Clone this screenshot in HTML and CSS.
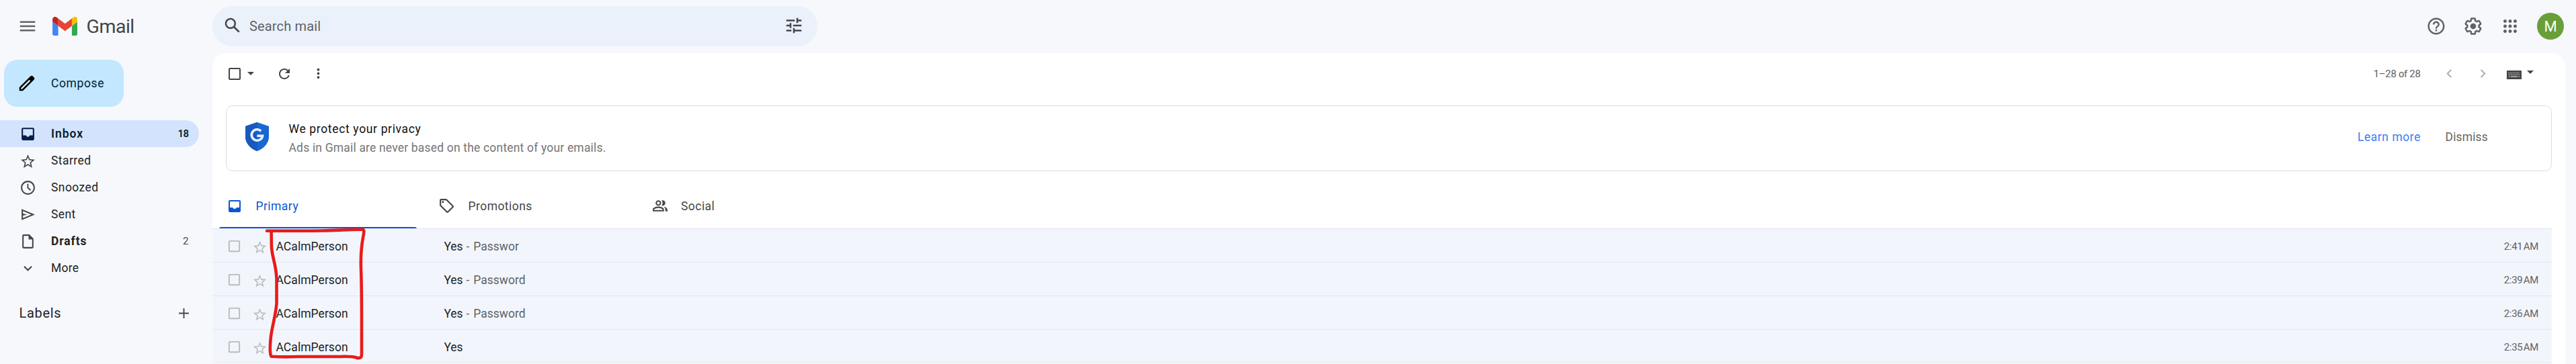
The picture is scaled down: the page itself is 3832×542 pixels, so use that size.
FILE: index.html
```html
<!DOCTYPE html>
<html lang="en">
<head>
<meta charset="utf-8">
<title>Inbox - Gmail</title>
<link rel="stylesheet" href="styles.css">
</head>
<body>
<svg class="sprite" aria-hidden="true">
  <symbol id="inbox" viewBox="0 0 24 24"><path d="M19 3H5c-1.1 0-2 .9-2 2v14c0 1.1.9 2 2 2h14c1.1 0 2-.9 2-2V5c0-1.1-.9-2-2-2zm0 11h-4.2c-.4 1.2-1.5 2-2.8 2s-2.4-.8-2.8-2H5V5h14v9z"/></symbol>
  <symbol id="star" viewBox="0 0 24 24"><path d="M22 9.24l-7.19-.62L12 2 9.19 8.63 2 9.24l5.46 4.73L5.82 21 12 17.27 18.18 21l-1.63-7.03L22 9.24zM12 15.4l-3.76 2.27 1-4.28-3.32-2.88 4.38-.38L12 6.1l1.71 4.04 4.38.38-3.32 2.88 1 4.28L12 15.4z"/></symbol>
  <symbol id="clock" viewBox="0 0 24 24"><path d="M12 2C6.5 2 2 6.5 2 12s4.5 10 10 10 10-4.5 10-10S17.5 2 12 2zm0 18c-4.41 0-8-3.59-8-8s3.59-8 8-8 8 3.59 8 8-3.59 8-8 8z"/><path d="M11 6.5v6l4.2 3.8 1.3-1.4-3.7-3.3V6.5z"/></symbol>
  <symbol id="send" viewBox="0 0 24 24"><path d="M3 20V4l19 8-19 8zm2-3l11.85-5L5 7v3.5l6 1.5-6 1.5V17z"/></symbol>
  <symbol id="draft" viewBox="0 0 24 24"><path d="M14 2H6c-1.1 0-2 .9-2 2v16c0 1.1.9 2 2 2h12c1.1 0 2-.9 2-2V8l-6-6zM6 20V4h7v5h5v11H6z"/></symbol>
  <symbol id="box" viewBox="0 0 24 24"><path d="M19 5v14H5V5h14m0-2H5c-1.1 0-2 .9-2 2v14c0 1.1.9 2 2 2h14c1.1 0 2-.9 2-2V5c0-1.1-.9-2-2-2z"/></symbol>
  <symbol id="caret" viewBox="0 0 10 5"><path d="M0 0h10L5 5z"/></symbol>
</svg>

<header class="topbar">
  <svg class="menu" viewBox="0 0 24 24"><path d="M3 18h18v-2H3v2zm0-5h18v-2H3v2zm0-7v2h18V6H3z"/></svg>
  <svg class="logo" viewBox="52 42 88 66">
    <path fill="#4285f4" d="M58 108h14V74L52 59v43c0 3.320 2.690 6 6 6"/>
    <path fill="#34a853" d="M120 108h14c3.320 0 6-2.690 6-6V59l-20 15"/>
    <path fill="#fbbc04" d="M120 48v26l20-15v-8c0-7.420-8.470-11.650-14.400-7.200"/>
    <path fill="#ea4335" d="M72 74V48l24 18 24-18v26L96 92"/>
    <path fill="#c5221f" d="M52 51v8l20 15V48l-5.600-4.200c-5.940-4.450-14.400-.22-14.400 7.200"/>
  </svg>
  <span class="brand">Gmail</span>
  <div class="search">
    <svg class="i30" viewBox="0 0 24 24"><path d="M20.490 19l-5.730-5.730C15.530 12.200 16 10.910 16 9.500 16 5.910 13.090 3 9.500 3S3 5.910 3 9.500 5.910 16 9.500 16c1.410 0 2.700-.47 3.770-1.240L19 20.490 20.490 19zM5 9.500C5 7.010 7.010 5 9.500 5S14 7.010 14 9.500 11.990 14 9.500 14 5 11.990 5 9.500z"/></svg>
    <span class="placeholder">Search mail</span>
    <svg class="i30 tune" viewBox="0 0 24 24"><path d="M3 17v2h6v-2H3zM3 5v2h10V5H3zm10 16v-2h8v-2h-8v-2h-2v6h2zM7 9v2H3v2h4v2h2V9H7zm14 4v-2H11v2h10zm-6-4h2V7h4V5h-4V3h-2v6z"/></svg>
  </div>
  <div class="account">
    <svg class="i30" viewBox="0 0 24 24"><path d="M11 18h2v-2h-2v2zm1-16C6.480 2 2 6.480 2 12s4.480 10 10 10 10-4.480 10-10S17.520 2 12 2zm0 18c-4.410 0-8-3.590-8-8s3.590-8 8-8 8 3.590 8 8-3.590 8-8 8zm0-14c-2.210 0-4 1.790-4 4h2c0-1.100.9-2 2-2s2 .9 2 2c0 2-3 1.750-3 5h2c0-2.250 3-2.500 3-5 0-2.210-1.790-4-4-4z"/></svg>
    <svg class="i30" viewBox="0 0 24 24"><path d="M13.850 22.250h-3.700c-.74 0-1.360-.54-1.450-1.270l-.27-1.890c-.27-.14-.53-.29-.79-.46l-1.800.72c-.7.260-1.470-.03-1.810-.65L2.200 15.530c-.35-.66-.2-1.440.36-1.880l1.530-1.190c-.01-.15-.02-.3-.02-.46 0-.15.010-.31.020-.46l-1.520-1.190c-.59-.45-.74-1.260-.37-1.880l1.850-3.190c.34-.62 1.110-.9 1.790-.63l1.810.73c.26-.17.520-.32.780-.46l.27-1.910c.09-.7.710-1.250 1.440-1.250h3.700c.74 0 1.360.54 1.450 1.270l.27 1.890c.27.140.53.290.79.460l1.800-.72c.71-.26 1.480.03 1.820.65l1.840 3.180c.36.660.2 1.440-.36 1.880l-1.520 1.190c.01.150.020.3.020.460s-.01.310-.02.460l1.520 1.190c.56.450.720 1.230.370 1.860l-1.860 3.220c-.34.620-1.110.9-1.800.630l-1.800-.72c-.26.170-.52.320-.78.460l-.27 1.910c-.1.680-.72 1.220-1.460 1.220zm-3.230-2h2.760l.37-2.550.53-.22c.44-.18.880-.44 1.340-.78l.45-.34 2.380.96 1.380-2.400-2.030-1.580.07-.56c.030-.26.060-.51.060-.78s-.03-.53-.06-.78l-.07-.56 2.030-1.580-1.390-2.400-2.390.96-.45-.35c-.42-.32-.87-.58-1.330-.77l-.52-.22-.37-2.550h-2.760l-.37 2.550-.53.210c-.44.190-.88.440-1.340.79l-.45.330-2.380-.95-1.390 2.390 2.030 1.580-.07.560a7 7 0 0 0-.06.790c0 .26.020.53.060.78l.07.560-2.030 1.580 1.380 2.400 2.390-.96.450.35c.43.330.86.580 1.330.77l.53.220.38 2.550z"/><circle cx="12" cy="12" r="3.500"/></svg>
    <svg class="i30" viewBox="0 0 24 24"><path d="M6 8c1.100 0 2-.9 2-2s-.9-2-2-2-2 .9-2 2 .9 2 2 2zm6 12c1.100 0 2-.9 2-2s-.9-2-2-2-2 .9-2 2 .9 2 2 2zm-6 0c1.100 0 2-.9 2-2s-.9-2-2-2-2 .9-2 2 .9 2 2 2zm0-6c1.100 0 2-.9 2-2s-.9-2-2-2-2 .9-2 2 .9 2 2 2zm6 0c1.100 0 2-.9 2-2s-.9-2-2-2-2 .9-2 2 .9 2 2 2zm4-8c0 1.100.9 2 2 2s2-.9 2-2-.9-2-2-2-2 .9-2 2zm-4 2c1.100 0 2-.9 2-2s-.9-2-2-2-2 .9-2 2 .9 2 2 2zm6 6c1.100 0 2-.9 2-2s-.9-2-2-2-2 .9-2 2 .9 2 2 2zm0 6c1.100 0 2-.9 2-2s-.9-2-2-2-2 .9-2 2 .9 2 2 2z"/></svg>
    <div class="avatar">M</div>
  </div>
</header>

<div class="body">
  <nav class="sidebar">
    <button class="compose">
      <svg class="pencil" viewBox="0 0 24 24"><path d="M20.410 4.940l-1.350-1.350c-.78-.78-2.050-.78-2.830 0L3 16.820V21h4.180L20.410 7.770c.79-.78.790-2.050 0-2.830zM6.410 19.060L5 19v-1.360l9.820-9.820 1.410 1.410-9.820 9.830z"/></svg>
      <span>Compose</span>
    </button>
    <div class="folder active"><svg class="i25"><use href="#inbox"/></svg><span class="label inbox">Inbox</span><span class="count">18</span></div>
    <div class="folder"><svg class="i25 low"><use href="#star"/></svg><span class="label">Starred</span></div>
    <div class="folder"><svg class="i25"><use href="#clock"/></svg><span class="label">Snoozed</span></div>
    <div class="folder"><svg class="i25 sent"><use href="#send"/></svg><span class="label">Sent</span></div>
    <div class="folder"><svg class="i25"><use href="#draft"/></svg><span class="label bold">Drafts</span><span class="count plain">2</span></div>
    <div class="folder"><svg class="i25" viewBox="0 0 24 24"><path d="M16.590 8.590L12 13.170 7.410 8.590 6 10l6 6 6-6z"/></svg><span class="label more">More</span></div>
    <div class="labels"><h2>Labels</h2><svg class="i25" viewBox="0 0 24 24"><path d="M19.200 12.900h-6.300v6.300h-1.800v-6.300H4.800v-1.800h6.300V4.800h1.800v6.300h6.300z"/></svg></div>
  </nav>

  <main class="panel">
    <div class="toolbar">
      <svg class="i24"><use href="#box"/></svg>
      <svg class="caret"><use href="#caret"/></svg>
      <svg class="i24 refresh" viewBox="0 0 24 24"><path d="M17.650 6.350A7.960 7.960 0 0 0 12 4c-4.420 0-7.990 3.580-7.990 8s3.570 8 7.990 8c3.730 0 6.840-2.550 7.730-6h-2.080A5.990 5.990 0 0 1 12 18c-3.310 0-6-2.690-6-6s2.690-6 6-6c1.660 0 3.140.690 4.220 1.780L13 11h7V4l-2.350 2.350z"/></svg>
      <svg class="i24 dots" viewBox="0 0 24 24"><path d="M12 8c1.100 0 2-.9 2-2s-.9-2-2-2-2 .9-2 2 .9 2 2 2zm0 2c-1.100 0-2 .9-2 2s.9 2 2 2 2-.9 2-2-.9-2-2-2zm0 6c-1.100 0-2 .9-2 2s.9 2 2 2 2-.9 2-2-.9-2-2-2z"/></svg>
      <span class="range">1–28 of 28</span>
      <svg class="i24 page" viewBox="0 0 24 24"><path d="M15.410 7.410L14 6l-6 6 6 6 1.410-1.410L10.830 12z"/></svg>
      <svg class="i24 page next" viewBox="0 0 24 24"><path d="M10 6L8.590 7.410 13.170 12l-4.580 4.590L10 18l6-6z"/></svg>
      <svg class="keyboard" viewBox="0 0 22 13"><rect width="22" height="13" rx=".5" fill="#444746"/><path d="M2.500 3.500h17M2.500 6h17" stroke="#a5a7a6" stroke-width="1.500" stroke-dasharray="1.300 .8"/><path d="M6 9h10M3 9h1.500M17.500 9H19" stroke="#c4c6c5" stroke-width="1.500"/></svg>
      <svg class="caret lang"><use href="#caret"/></svg>
    </div>

    <section class="notice">
      <svg class="shield" viewBox="0 0 35 43">
        <path fill="#1967d2" d="M17.500 0L35 6v15.500C35 31 27.500 39.500 17.500 43 7.500 39.500 0 31 0 21.500V6z"/>
        <path fill="#185abc" d="M17.500 0v43C7.500 39.500 0 31 0 21.500V6z"/>
        <path fill="none" stroke="#e8f0fe" stroke-width="3.600" d="M23.300 13.200A8.200 8.200 0 1 0 25.600 20.200H17.300"/>
      </svg>
      <div class="copy"><strong>We protect your privacy</strong><p>Ads in Gmail are never based on the content of your emails.</p></div>
      <a class="learn">Learn more</a>
      <a class="dismiss">Dismiss</a>
    </section>

    <div class="tabs">
      <div class="tab current"><svg class="i24"><use href="#inbox"/></svg><span>Primary</span></div>
      <div class="tab promo"><svg class="i25" viewBox="0 0 24 24"><path d="M21.410 11.580l-9-9C12.050 2.220 11.550 2 11 2H4c-1.100 0-2 .9-2 2v7c0 .55.220 1.050.590 1.420l9 9c.36.360.860.580 1.410.580s1.050-.22 1.410-.59l7-7c.37-.36.590-.86.590-1.410s-.23-1.060-.59-1.420zM13 20.010L4 11V4h7v-.01l9 9-7 7.020z"/><circle cx="6.500" cy="6.500" r="1.500"/></svg><span>Promotions</span></div>
      <div class="tab social"><svg class="i25" viewBox="0 0 24 24"><path d="M16.500 13.100c1.600 1.100 2.500 2.400 2.500 4.400V20h3v-2.500c0-2.400-2.700-3.900-5.500-4.400zM15 12c2.200 0 4-1.800 4-4s-1.800-4-4-4c-.5 0-.9.1-1.300.2C14.500 5.300 15 6.600 15 8s-.5 2.700-1.300 3.800c.4.100.8.200 1.300.2zM9 12c2.210 0 4-1.790 4-4s-1.790-4-4-4-4 1.790-4 4 1.790 4 4 4zm0-6c1.100 0 2 .9 2 2s-.9 2-2 2-2-.9-2-2 .9-2 2-2zm0 7c-2.670 0-8 1.340-8 4v3h16v-3c0-2.660-5.330-4-8-4zm6 5H3v-.99C3.200 16.290 6.300 15 9 15s5.800 1.290 6 2v1z"/></svg><span>Social</span></div>
    </div>

    <div class="mails">
      <div class="mail"><svg class="i23"><use href="#box"/></svg><svg class="i23 star"><use href="#star"/></svg><span class="from">ACalmPerson</span><span class="subject">Yes</span><span class="snippet"><i>-</i>Passwor</span><time>2:41&#8239;AM</time></div>
      <div class="mail"><svg class="i23"><use href="#box"/></svg><svg class="i23 star"><use href="#star"/></svg><span class="from">ACalmPerson</span><span class="subject">Yes</span><span class="snippet"><i>-</i>Password</span><time>2:39&#8239;AM</time></div>
      <div class="mail"><svg class="i23"><use href="#box"/></svg><svg class="i23 star"><use href="#star"/></svg><span class="from">ACalmPerson</span><span class="subject">Yes</span><span class="snippet"><i>-</i>Password</span><time>2:36&#8239;AM</time></div>
      <div class="mail last"><svg class="i23"><use href="#box"/></svg><svg class="i23 star"><use href="#star"/></svg><span class="from">ACalmPerson</span><span class="subject">Yes</span><time>2:35&#8239;AM</time></div>
      <svg class="scribble" viewBox="0 0 160 210"><path d="M13 13.700C40 14 75 13.700 96 13.500S135 11.500 155 11.800C159 12 157 17 156 24C153 40 152.500 55 153 70C154 95 154 115 154 150V198Q154 204 148 203C140 200 132 200.500 122 201H60C45 201.500 32 201.500 19.500 200.700C17 196 18 180 19 171C21 155 26 140 27.500 122V85C26.500 62 21 55 20 38C19.500 28 20 22 19.500 15"/></svg>
    </div>
  </main>
</div>
</body>
</html>
```
FILE: styles.css
```css
* { box-sizing: border-box; }
body {
  margin: 0;
  width: 3832px;
  height: 542px;
  overflow: hidden;
  background: #f6f8fc;
  color: #1f1f1f;
  font: 17.5px Roboto, "Liberation Sans", sans-serif;
}
svg { flex: none; display: block; fill: #444746; }
.sprite { position: absolute; width: 0; height: 0; }
.i23 { width: 23px; height: 23px; }
.i24 { width: 24px; height: 24px; }
.i25 { width: 25px; height: 25px; }
.i30 { width: 30px; height: 30px; }

/* Top bar */
.topbar { display: flex; align-items: center; height: 79px; padding: 0 18px 1px 26px; }
.menu { width: 30px; height: 30px; fill: #5f6368; }
.logo { width: 37.5px; height: 28px; margin-left: 21.5px; }
.brand { width: 187.5px; margin-left: 13.5px; font-size: 28.5px; letter-spacing: -.5px; color: #444746; }
.search { display: flex; align-items: center; width: 900px; height: 60px; padding: 0 20px 0 15px; border-radius: 30px; background: #eaf1fb; }
.search .i30 { margin-top: -2px; }
.search .tune { margin-left: auto; }
.placeholder { margin-left: 10px; font-size: 20px; letter-spacing: .15px; color: #5f6368; }
.account { display: flex; align-items: center; gap: 25px; margin-left: auto; }
.account svg { fill: #5f6368; }
.avatar { width: 40px; height: 40px; border-radius: 50%; background: #689f38; color: #fff; font-size: 22px; line-height: 42px; text-align: center; }

/* Sidebar */
.body { display: flex; }
.sidebar { width: 316px; padding-top: 10px; }
.compose { display: flex; align-items: center; width: 178px; height: 70px; margin: 0 0 20px 6px; padding: 0 0 0 19px; border: 0; border-radius: 20px; background: #c2e7ff; color: #001d35; font: inherit; letter-spacing: .6px; }
.pencil { width: 30px; height: 30px; fill: #000; margin-right: 21px; }
.folder { display: flex; align-items: center; width: 296px; height: 40px; padding: 0 15.5px 0 29px; }
.folder.active { border-radius: 0 20px 20px 0; background: #d3e3fd; color: #001d35; }
.active svg { fill: #041e49; }
.label { margin-left: 22px; letter-spacing: .43px; }
.label.inbox { font-weight: 600; letter-spacing: .95px; }
.label.bold { font-weight: 700; letter-spacing: .9px; }
.label.more { letter-spacing: .2px; }
.count { margin-left: auto; font-size: 15px; font-weight: 600; letter-spacing: -.6px; }
.count.plain { font-weight: 400; letter-spacing: 0; color: #444746; }
.low { margin-top: 2px; }
.labels { display: flex; align-items: center; justify-content: space-between; width: 296px; height: 40px; margin-top: 27px; padding: 0 10px 0 28.5px; }
.labels h2 { margin: 0; font-size: 20px; font-weight: 400; letter-spacing: .7px; }

/* Mail panel */
.panel { width: 3500px; height: 463px; overflow: hidden; border-radius: 20px 20px 0 0; background: #fff; }
.toolbar { display: flex; align-items: center; height: 61px; padding: 0 47px 0 20.5px; }
.caret { width: 10px; height: 5px; margin-left: 7.5px; }
.refresh { margin-left: 33px; }
.dots { width: 23px; height: 23px; margin-left: 26.5px; }
.range { margin-left: auto; font-size: 15px; letter-spacing: -.35px; color: #5e5e5e; }
.page { width: 25px; height: 25px; margin-left: 30px; fill: #b0b1b1; }
.page.next { margin-left: 25px; }
.keyboard { width: 22px; height: 13px; margin: 3px 0 0 23.5px; }
.caret.lang { margin: -4px 0 0 8px; }

.notice { display: flex; align-items: center; width: 3460px; height: 98px; margin: 17px 0 0 20px; padding: 0 94px 0 28px; border: 1px solid #dadce0; border-radius: 10px; }
.shield { width: 35px; height: 43px; margin-top: -6px; }
.copy { margin: -1px auto 0 29.5px; line-height: 28px; }
.copy strong { display: block; font-weight: 450; letter-spacing: .65px; color: #111; }
.copy p { margin: 0; letter-spacing: .18px; color: #757575; }
.learn, .dismiss { margin-top: -5px; letter-spacing: .55px; color: #3b7cf5; }
.dismiss { margin-left: 36.5px; letter-spacing: .15px; color: #666; }

.tabs { display: flex; height: 85px; padding-top: 15px; }
.tab { display: flex; align-items: center; width: 316px; height: 70px; padding: 3px 0 0 20.5px; color: #444746; letter-spacing: .45px; font-weight: 450; }
.tab span { margin-left: 20px; }
.tab.current { position: relative; color: #0b57d0; }
.tab.current svg { fill: #0b57d0; }
.tab.current::after { content: ""; position: absolute; left: 10px; bottom: -1px; width: 294px; height: 3px; border-radius: 3px 3px 0 0; background: #0b57d0; }
.tab.promo { padding-left: 19.5px; }
.tab.social { padding-left: 21.5px; }
.tab.social span { margin-left: 18.5px; }

.mails { position: relative; width: 3480px; }
.mail { display: flex; align-items: center; height: 50px; padding: 2px 20px 0 20.5px; border-top: 1px solid #e1e5ec; background: #f2f6fc; }
.mail.last { height: 51px; padding-bottom: 0; border-bottom: 1px solid #e1e5ec; }
.mail svg { fill: #b9bbbe; }
.mail .star { margin: 3px 0 0 15px; }
.from { width: 250px; margin-left: 13px; letter-spacing: .05px; }
.subject { letter-spacing: -.1px; }
.snippet { margin-left: 5px; color: #5f6368; }
.snippet i { margin-right: 6px; font-style: normal; }
.mail time { margin-left: auto; font-size: 15px; letter-spacing: -.35px; color: #5f6368; }
.mails .scribble { position: absolute; left: 68px; top: -10px; width: 160px; height: 210px; fill: none; stroke: #e91b1b; stroke-width: 4.6; stroke-linecap: round; stroke-linejoin: round; }
```
